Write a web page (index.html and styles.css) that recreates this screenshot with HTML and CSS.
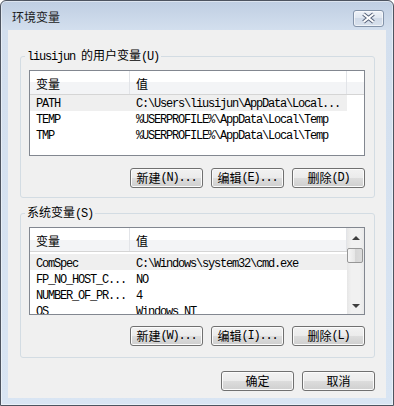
FILE: index.html
```html
<!DOCTYPE html>
<html lang="zh-CN">
  <head>
    <meta charset="UTF-8" />
    <title>环境变量</title>
    <link rel="stylesheet" href="styles.css">
  </head>
  <body>
    <div id="window">
      <div id="titlebar">
        <span id="title">环境变量</span>
        <div id="close">
          <svg width="29" height="15" viewBox="0 0 29 15">
            <path d="M9.5 3 L19.5 11 M19.5 3 L9.5 11" stroke="#56627a" stroke-width="4" />
            <path d="M9.5 3 L19.5 11 M19.5 3 L9.5 11" stroke="#fff" stroke-width="2" />
          </svg>
        </div>
      </div>
      <div id="client">
        <!-- 用户变量 -->
        <fieldset class="group group-user">
          <legend><span class="en">liusijun </span>的用户变量<span class="en">(U)</span></legend>
          <div class="list list-user">
            <div class="list-main">
              <div class="list-head">
                <div class="col1">变量</div>
                <div class="col2">值</div>
                <div class="fill"></div>
              </div>
              <div class="list-body en">
                <div class="row row-sel"><div class="col1">PATH</div><div class="col2">C:\Users\liusijun\AppData\Local...</div></div>
                <div class="row"><div class="col1">TEMP</div><div class="col2">%USERPROFILE%\AppData\Local\Temp</div></div>
                <div class="row"><div class="col1">TMP</div><div class="col2">%USERPROFILE%\AppData\Local\Temp</div></div>
              </div>
            </div>
          </div>
          <div class="buttons">
            <div class="btn">新建<span class="en">(N)...</span></div>
            <div class="btn">编辑<span class="en">(E)...</span></div>
            <div class="btn">删除<span class="en">(D)</span></div>
          </div>
        </fieldset>

        <!-- 系统变量 -->
        <fieldset class="group group-sys">
          <legend>系统变量<span class="en">(S)</span></legend>
          <div class="list list-sys">
            <div class="list-main">
              <div class="list-head">
                <div class="col1">变量</div>
                <div class="col2">值</div>
              </div>
              <div class="list-body en">
                <div class="row row-sel"><div class="col1">ComSpec</div><div class="col2">C:\Windows\system32\cmd.exe</div></div>
                <div class="row"><div class="col1">FP_NO_HOST_C...</div><div class="col2">NO</div></div>
                <div class="row"><div class="col1">NUMBER_OF_PR...</div><div class="col2">4</div></div>
                <div class="row"><div class="col1">OS</div><div class="col2">Windows_NT</div></div>
              </div>
            </div>
            <div class="scrollbar">
              <div class="sb-btn sb-up"></div>
              <div class="sb-track"><div class="sb-thumb"></div></div>
              <div class="sb-btn sb-down"></div>
            </div>
          </div>
          <div class="buttons">
            <div class="btn">新建<span class="en">(W)...</span></div>
            <div class="btn">编辑<span class="en">(I)...</span></div>
            <div class="btn">删除<span class="en">(L)</span></div>
          </div>
        </fieldset>

        <div class="buttons dlg-buttons">
          <div class="btn">确定</div>
          <div class="btn">取消</div>
        </div>
      </div>
    </div>
  </body>
</html>
```

FILE: styles.css
```css
* {
  margin: 0;
  padding: 0;
  box-sizing: border-box;
}

body {
  background: #fff;
  font-family: "Noto Sans CJK SC", sans-serif;
  font-size: 12px;
  color: #000;
}

.en {
  font-family: "Liberation Mono", "Noto Sans CJK SC", monospace;
  letter-spacing: -1.2px;
}

#window {
  width: 394px;
  height: 406px;
  border: 1px solid #4d5460;
  border-radius: 6px 6px 0 0;
  padding: 0 7px 7px;
  background: linear-gradient(#bfcee2, #d3dfee 29px, #d9e5f3);
  box-shadow: inset 0 0 0 1px rgba(255, 255, 255, 0.45);
  display: flex;
  flex-direction: column;
}

#titlebar {
  height: 29px;
  display: flex;
  justify-content: space-between;
  align-items: flex-start;
  padding: 8px 2px 0 4px;
}

#title {
  line-height: 16px;
  color: #1b1b1b;
}

#close {
  width: 31px;
  height: 17px;
  margin-top: 1px;
  border: 1px solid #8393a9;
  border-radius: 3px;
  background: linear-gradient(#eef2f8, #dfe6f0 50%, #d0dae8 50%, #d8e1ed);
  box-shadow: inset 0 0 0 1px rgba(255, 255, 255, 0.6);
}

#close svg {
  display: block;
}

#client {
  flex: 1;
  background: #f0f0f0;
  padding: 19px 11px 0 12px;
  display: flex;
  flex-direction: column;
}

/* 分组框 */
.group {
  border: 1px solid #d3dce3;
  border-radius: 3px;
  padding: 7px 9px 9px 8px;
}

.group legend {
  margin-left: -4px;
  padding: 0 2px;
  line-height: 12px;
}

.group-sys {
  margin-top: 8px;
  padding-bottom: 11px;
}

/* 列表 */
.list {
  border: 1px solid #828790;
  background: #fff;
  display: flex;
  overflow: hidden;
}

.list-user {
  height: 86px;
}

.list-sys {
  height: 88px;
}

.list-main {
  flex: 1;
  overflow: hidden;
}

.list-head {
  display: flex;
  height: 24px;
  border-bottom: 1px solid #d5d5d5;
  background: linear-gradient(#fff 50%, #f3f4f6 50%);
}

.list-head div {
  padding: 5px 6px 0;
  line-height: 16px;
  border-right: 1px solid #e2e4e8;
}

.list-head .fill {
  flex: 1;
  border-right: 0;
}

.col1 {
  width: 100px;
  flex: none;
}

.col2 {
  width: 217px;
  flex: none;
}

.row {
  display: flex;
  height: 16px;
  width: 317px;
}

.row div {
  padding: 2px 6px 0;
  line-height: 14px;
  white-space: nowrap;
  overflow: hidden;
}

.list-sys .list-body {
  padding-top: 2px;
}

.list-sys .row div {
  padding-top: 3px;
}

.row-sel {
  background: #efefef;
}

/* 滚动条 */
.scrollbar {
  width: 17px;
  flex: none;
  display: flex;
  flex-direction: column;
  background: linear-gradient(90deg, #e6e6e6, #f1f1f1 25%, #f1f1f1 75%, #e9e9e9);
}

.sb-btn {
  height: 17px;
  display: flex;
  justify-content: center;
  align-items: center;
}

.sb-up {
  padding-top: 3px;
}

.sb-up::after {
  content: "";
  border-left: 4px solid transparent;
  border-right: 4px solid transparent;
  border-bottom: 4px solid #3f3f3f;
}

.sb-down::after {
  content: "";
  border-left: 4px solid transparent;
  border-right: 4px solid transparent;
  border-top: 4px solid #3f3f3f;
}

.sb-track {
  flex: 1;
}

.sb-thumb {
  height: 15px;
  margin: 3px 1px 0 0;
  border: 1px solid #979797;
  border-radius: 2px;
  background: linear-gradient(90deg, #f6f6f6, #e6e6e6 50%, #d6d6d6 50%, #dcdcdc);
}

/* 按钮 */
.buttons {
  display: flex;
  justify-content: flex-end;
  gap: 8px;
  margin-top: 12px;
}

.group-sys .buttons {
  margin-top: 11px;
}

.dlg-buttons {
  margin-top: 13px;
}

.btn {
  width: 73px;
  height: 20px;
  border: 1px solid #707070;
  border-radius: 3px;
  background: linear-gradient(#f2f2f2, #ebebeb 50%, #dddddd 50%, #cfcfcf);
  box-shadow: inset 0 0 0 1px #fbfbfb;
  display: flex;
  align-items: center;
  justify-content: center;
  line-height: 16px;
}
```
